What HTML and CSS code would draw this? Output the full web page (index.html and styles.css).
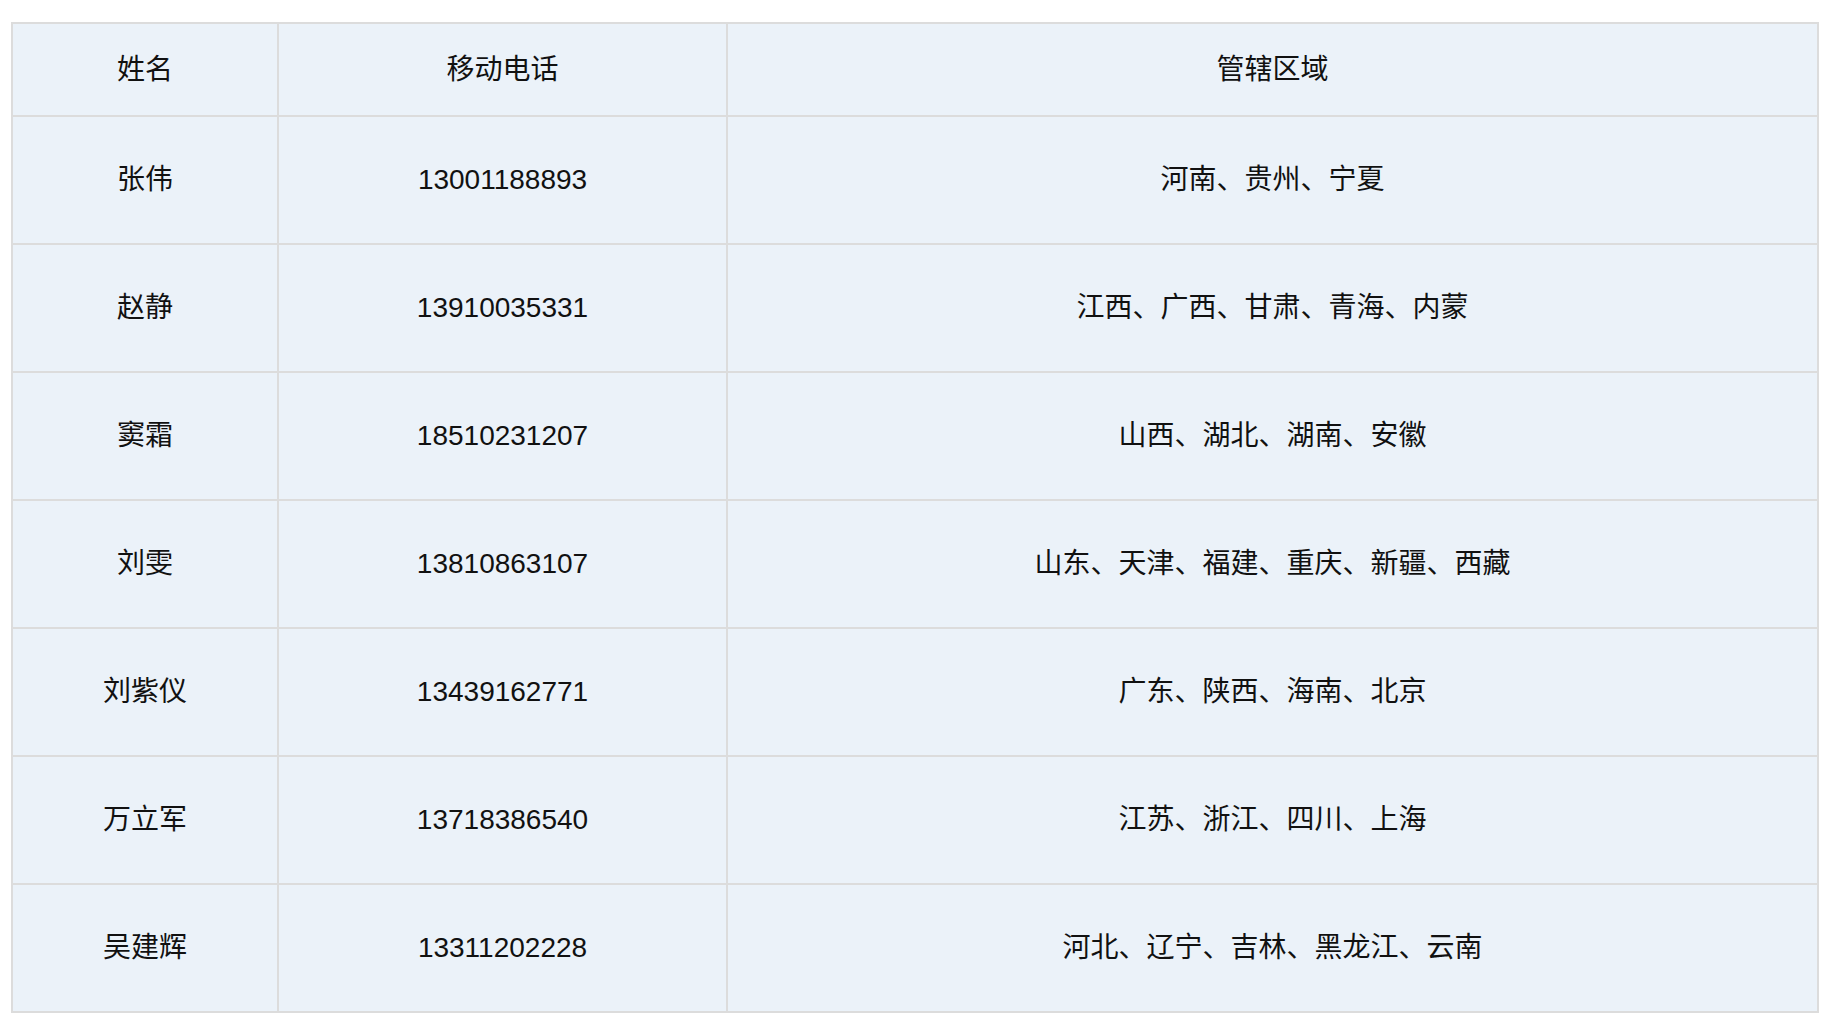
FILE: index.html
```html
<!DOCTYPE html>
<html lang="zh-CN">
<head>
  <meta charset="UTF-8">
  <meta name="viewport" content="width=device-width, initial-scale=1.0">
  <title>区域负责人</title>
  <link rel="stylesheet" href="styles.css">
</head>
<body>

  <div class="wrap">
    <table class="staff">
      <colgroup>
        <col class="col-name">
        <col class="col-phone">
        <col>
      </colgroup>
      <thead>
        <tr>
          <th>姓名</th>
          <th>移动电话</th>
          <th>管辖区域</th>
        </tr>
      </thead>
      <tbody>
        <tr>
          <td>张伟</td>
          <td>13001188893</td>
          <td>河南、贵州、宁夏</td>
        </tr>
        <tr>
          <td>赵静</td>
          <td>13910035331</td>
          <td>江西、广西、甘肃、青海、内蒙</td>
        </tr>
        <tr>
          <td>窦霜</td>
          <td>18510231207</td>
          <td>山西、湖北、湖南、安徽</td>
        </tr>
        <tr>
          <td>刘雯</td>
          <td>13810863107</td>
          <td>山东、天津、福建、重庆、新疆、西藏</td>
        </tr>
        <tr>
          <td>刘紫仪</td>
          <td>13439162771</td>
          <td>广东、陕西、海南、北京</td>
        </tr>
        <tr>
          <td>万立军</td>
          <td>13718386540</td>
          <td>江苏、浙江、四川、上海</td>
        </tr>
        <tr>
          <td>吴建辉</td>
          <td>13311202228</td>
          <td>河北、辽宁、吉林、黑龙江、云南</td>
        </tr>
      </tbody>
    </table>
  </div>

</body>
</html>
```

FILE: styles.css
```css
body {
  margin: 0;
  padding: 0;
  background: #fff;
  font-family: "Liberation Sans", "Noto Sans CJK SC", sans-serif;
  color: #111;
}

.wrap {
  padding: 22px 0 0 11px;
}

.staff {
  width: 1808px;
  border-collapse: collapse;
  table-layout: fixed;
  background: #ebf2f9;
  font-size: 28px;
  line-height: 1.2;
}

.staff .col-name {
  width: 266px;
}

.staff .col-phone {
  width: 449px;
}

.staff th,
.staff td {
  border: 2px solid #dcdcdc;
  text-align: center;
  vertical-align: middle;
  padding: 0;
  font-weight: 400;
}

.staff thead tr {
  height: 93px;
}

.staff tbody tr {
  height: 128px;
}
```
